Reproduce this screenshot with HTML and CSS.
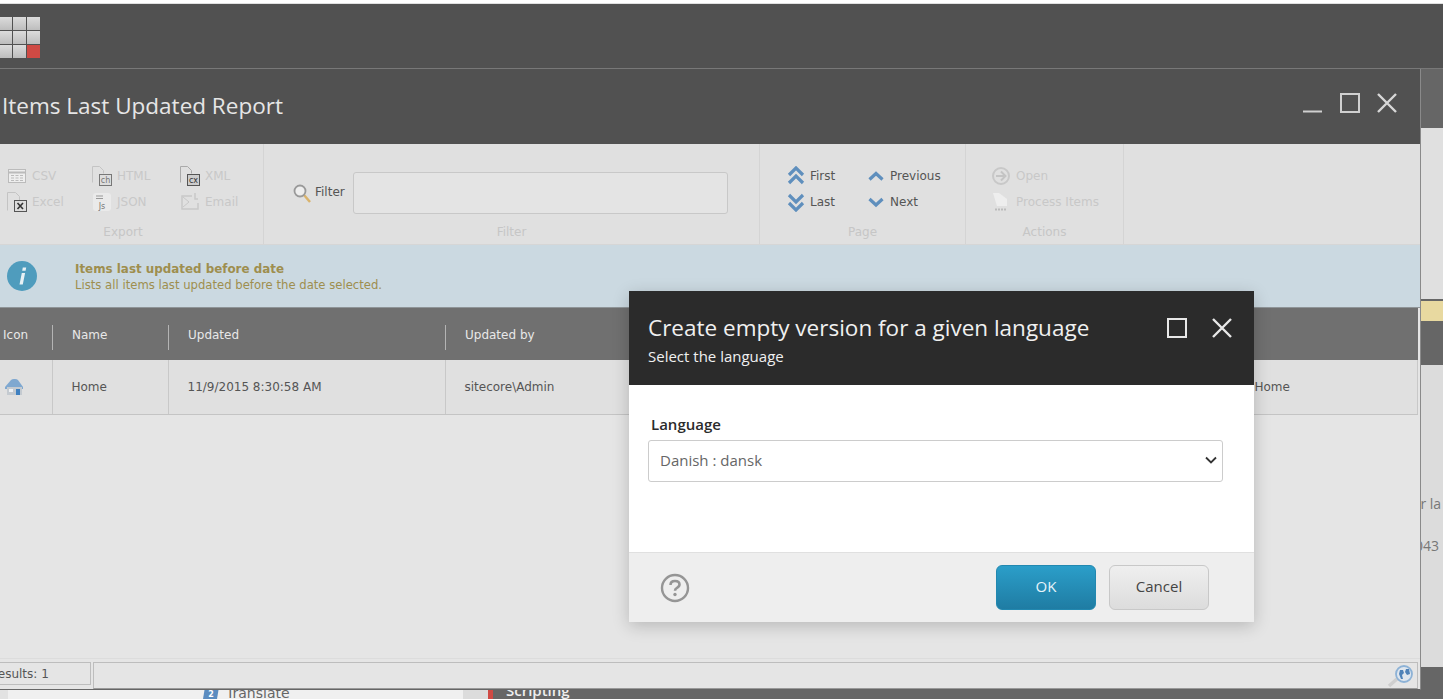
FILE: index.html
```html
<!DOCTYPE html>
<html lang="en">

<head>
    <meta charset="UTF-8">
    <title>Items Last Updated Report</title>
    <link rel="stylesheet" href="styles.css">
</head>

<body>
    <header class="top-bar">
        <div class="tiles">
            <i></i><i></i><i></i>
            <i></i><i></i><i></i>
            <i></i><i></i><i class="tile-red"></i>
        </div>
    </header>

    <div class="desk">
        <main class="window">
            <div class="title-bar">
                <h1>Items Last Updated Report</h1>
                <div class="window-controls">
                    <svg width="20" height="20" viewBox="0 0 20 20"><path d="M0 18.500h19" stroke="#d0d0d0" stroke-width="2"/></svg>
                    <svg width="20" height="20" viewBox="0 0 20 20"><rect x="1" y="1" width="18" height="18" fill="none" stroke="#d0d0d0" stroke-width="2"/></svg>
                    <svg width="20" height="20" viewBox="0 0 20 20"><path d="M1 1l18 18M19 1L1 19" stroke="#d8d8d8" stroke-width="2.400"/></svg>
                </div>
            </div>

            <div class="ribbon">
                <section class="group group-export">
                    <div class="group-body cols-export">
                        <a class="tool off"><svg width="20" height="20" viewBox="0 0 20 20"><rect x="1.500" y="3.500" width="17" height="13" fill="#eee" stroke="#bbb"/><path d="M1.500 6.500h17" stroke="#bbb" stroke-width="2"/><path d="M4 9.500h3M8.500 9.500h3M13 9.500h3M4 12h3M8.500 12h3M13 12h3M4 14.500h3M8.500 14.500h3M13 14.500h3" stroke="#bbb"/></svg>CSV</a>
                        <a class="tool off"><svg width="20" height="20" viewBox="0 0 20 20"><path d="M.500 16.500V.500h7l4 4v3" fill="none" stroke="#c4c4c4"/><rect x="7.500" y="8.500" width="12" height="11" fill="#ddd" stroke="#777"/><text x="13.500" y="17" class="icon-text">ch</text></svg>HTML</a>
                        <a class="tool off"><svg width="20" height="20" viewBox="0 0 20 20"><path d="M.500 16.500V.500h7l4 4v3" fill="none" stroke="#aaa"/><rect x="7.500" y="8.500" width="12" height="11" fill="#ccc" stroke="#555"/><text x="13.500" y="17" class="icon-text dark">cx</text></svg>XML</a>
                        <a class="tool off"><svg width="20" height="20" viewBox="0 0 20 20"><path d="M.500 18.500V.500h8l4 4v4" fill="none" stroke="#c4c4c4"/><rect x="7.500" y="8.500" width="12" height="11" fill="#ddd" stroke="#555"/><path d="M10.500 11l5.500 6M16 11l-5.500 6" stroke="#333" stroke-width="1.600"/></svg>Excel</a>
                        <a class="tool off"><svg width="20" height="20" viewBox="0 0 20 20"><rect x="1" y="1" width="18" height="18" rx="3" fill="#eaeaea"/><path d="M4 4h7M4 6.500h7" stroke="#999"/><text x="10" y="16.500" class="icon-text">Js</text></svg>JSON</a>
                        <a class="tool off"><svg width="20" height="20" viewBox="0 0 20 20"><path d="M12 4H2v13h16v-6" fill="none" stroke="#c8c8c8" stroke-width="1.500"/><path d="M3 5l6 5-6 5" fill="none" stroke="#c8c8c8"/><path d="M15 1v6h3" fill="none" stroke="#c8c8c8" stroke-width="1.500"/></svg>Email</a>
                    </div>
                    <footer>Export</footer>
                </section>

                <section class="group group-filter">
                    <div class="group-body filter-row">
                        <svg width="20" height="20" viewBox="0 0 20 20"><path d="M12 12l6 7" stroke="#d9b36c" stroke-width="2.500"/><circle cx="8" cy="8" r="5.500" fill="#eee" stroke="#999" stroke-width="1.800"/></svg>
                        <label for="filterBox">Filter</label>
                        <input type="text" id="filterBox">
                    </div>
                    <footer>Filter</footer>
                </section>

                <section class="group group-page">
                    <div class="group-body cols-page">
                        <a class="tool"><svg width="18" height="20" viewBox="0 0 18 20"><path d="M2 9l7-7 7 7M2 17l7-7 7 7" fill="none" stroke="#5f8fbd" stroke-width="3.200"/></svg>First</a>
                        <a class="tool"><svg width="18" height="20" viewBox="0 0 18 20"><path d="M2.500 13.500L9 7.500l6.500 6" fill="none" stroke="#5f8fbd" stroke-width="3.200"/></svg>Previous</a>
                        <a class="tool"><svg width="18" height="20" viewBox="0 0 18 20"><path d="M2 3l7 7 7-7M2 11l7 7 7-7" fill="none" stroke="#5f8fbd" stroke-width="3.200"/></svg>Last</a>
                        <a class="tool"><svg width="18" height="20" viewBox="0 0 18 20"><path d="M2.500 7l6.500 6 6.500-6" fill="none" stroke="#5f8fbd" stroke-width="3.200"/></svg>Next</a>
                    </div>
                    <footer>Page</footer>
                </section>

                <section class="group group-actions">
                    <div class="group-body cols-actions">
                        <a class="tool off"><svg width="20" height="20" viewBox="0 0 20 20"><circle cx="10" cy="10" r="8" fill="none" stroke="#c8c8c8" stroke-width="2"/><path d="M5 10h8M10 5.500l4.500 4.500-4.500 4.500" fill="none" stroke="#c4c4c4" stroke-width="2"/></svg>Open</a>
                        <a class="tool off"><svg width="20" height="20" viewBox="0 0 20 20"><path d="M2 1h6l8 6v7H6z" fill="#eeeeee"/><path d="M4 17.500h2M7 17.500h2M10 17.500h2M13 17.500h2" stroke="#bbb" stroke-width="2"/></svg>Process Items</a>
                    </div>
                    <footer>Actions</footer>
                </section>
            </div>

            <div class="info-bar">
                <svg width="30" height="30" viewBox="0 0 30 30"><circle cx="15" cy="15" r="15" fill="#4f9cbd"/><path d="M15.800 6.500h3.400l-.6 3.200h-3.400zM14.800 12h3.300l-2.300 11.500h-3.300z" fill="#e8f1f5"/></svg>
                <div>
                    <strong>Items last updated before date</strong>
                    <p>Lists all items last updated before the date selected.</p>
                </div>
            </div>

            <div class="results">
                <table>
                    <colgroup>
                        <col class="c-icon">
                        <col class="c-name">
                        <col class="c-updated">
                        <col class="c-by">
                        <col class="c-path">
                        <col>
                    </colgroup>
                    <tr>
                        <th><span>Icon</span></th>
                        <th><span>Name</span></th>
                        <th><span>Updated</span></th>
                        <th><span>Updated by</span></th>
                        <th></th>
                        <th></th>
                    </tr>
                    <tr>
                        <td><svg width="20" height="18" viewBox="0 0 20 18"><path d="M1 9l6-7q1-1 3-1h1q2 0 3 1l5 7v2H1z" fill="#7fa8d0"/><path d="M3 9h15v8H3z" fill="#c4cad0"/><path d="M12 11h4v6h-4z" fill="#3f80c0"/><path d="M5 11h4v3H5z" fill="#eef1f4"/></svg></td>
                        <td>Home</td>
                        <td>11/9/2015 8:30:58 AM</td>
                        <td>sitecore\Admin</td>
                        <td></td>
                        <td>Home</td>
                    </tr>
                </table>
            </div>

            <div class="status-bar">
                <div class="count"><span>Results: 1</span></div>
                <div class="status-fill">
                    <svg width="30" height="24" viewBox="0 0 30 24"><path d="M2 22l9-8" stroke="#cfcfcf" stroke-width="3.500"/><circle cx="17" cy="10" r="8" fill="#dfe6ee" stroke="#8db2d6" stroke-width="1.800"/><path d="M13 6h3l1 3-2 2 1 4h-2l-2-5zM19 5h3l1 5-3 1-2-3z" fill="#4f82b8"/></svg>
                </div>
            </div>
        </main>

        <aside class="side">
            <div class="side-dark"></div>
            <div class="side-light"></div>
            <div class="side-yellow"></div>
            <div class="side-gray"></div>
            <div class="side-text">
                <p>or la</p>
                <p class="side-num">043</p>
            </div>
            <div class="side-foot"></div>
        </aside>
    </div>

    <div class="under">
        <div class="under-edge"></div>
        <div class="under-list">
            <svg width="16" height="12" viewBox="0 0 16 12"><path d="M2 0h14l-2 12H0z" fill="#5b8cc0"/><text x="8" y="10" class="icon-text light">2</text></svg>
            <span>Translate</span>
        </div>
        <div class="under-gap"></div>
        <div class="under-dark"><span>Scripting</span></div>
    </div>

    <div class="dialog">
        <div class="dialog-head">
            <div>
                <h2>Create empty version for a given language</h2>
                <p>Select the language</p>
            </div>
            <div class="dialog-controls">
                <svg width="20" height="20" viewBox="0 0 20 20"><rect x="1" y="1" width="18" height="18" fill="none" stroke="#e8e8e8" stroke-width="2"/></svg>
                <svg width="20" height="20" viewBox="0 0 20 20"><path d="M1 1l18 18M19 1L1 19" stroke="#e8e8e8" stroke-width="2.400"/></svg>
            </div>
        </div>
        <div class="dialog-body">
            <label for="langSelect">Language</label>
            <div class="select-box" id="langSelect">
                <span>Danish : dansk</span>
                <svg width="12" height="8" viewBox="0 0 12 8"><path d="M1 1.500l5 5 5-5" fill="none" stroke="#333" stroke-width="1.800"/></svg>
            </div>
        </div>
        <div class="dialog-foot">
            <svg class="help" width="30" height="30" viewBox="0 0 30 30"><circle cx="15" cy="15" r="13" fill="none" stroke="#959595" stroke-width="2.400"/><path d="M10.500 12q0-4 4.500-4t4.500 3.600q0 2-2.500 3.200-2 1-2 3" fill="none" stroke="#959595" stroke-width="2.600"/><circle cx="15" cy="21.500" r="1.700" fill="#959595"/></svg>
            <button class="btn btn-ok">OK</button>
            <button class="btn btn-cancel">Cancel</button>
        </div>
    </div>
</body>

</html>
```

FILE: styles.css
```css
* {
    box-sizing: border-box;
}

html,
body {
    margin: 0;
    height: 699px;
    overflow: hidden;
}

body {
    position: relative;
    display: flex;
    flex-direction: column;
    padding-top: 3px;
    background-color: #fff;
    font-family: 'DejaVu Sans', sans-serif;
    font-size: 12px;
    color: #555;
}

h1,
h2,
p {
    margin: 0;
    font-weight: normal;
}

.icon-text {
    font-size: 8px;
    text-anchor: middle;
    fill: #777;
}

.icon-text.dark {
    fill: #333;
}

.icon-text.light {
    font-weight: bold;
    fill: #fff;
}

/* top bar */
.top-bar {
    height: 66px;
    flex: none;
    padding-top: 13px;
    background-color: #515151;
    border-top: 1px solid #e0e0e0;
    border-bottom: 1px solid #787878;
}

.tiles {
    display: grid;
    grid-template-columns: repeat(3, 13px);
    grid-auto-rows: 13px;
    gap: 1px;
    width: 41px;
    margin-left: -1px;
}

.tiles i {
    background: linear-gradient(#dcdcdc, #bdbdbd);
}

.tiles .tile-red {
    background: #cf4a44;
}

/* window */
.desk {
    display: flex;
    height: 621px;
    flex: none;
}

.window {
    width: 1421px;
    flex: none;
    display: flex;
    flex-direction: column;
    background-color: #e5e5e5;
    border-right: 1px solid #8a8a8a;
    border-bottom: 1px solid #666;
}

.title-bar {
    height: 75px;
    flex: none;
    display: flex;
    align-items: center;
    justify-content: space-between;
    padding: 0 23px 3px 2px;
    background-color: #515151;
}

.title-bar h1 {
    font-family: 'Open Sans', sans-serif;
    font-size: 22.5px;
    color: #e6e6e6;
}

.window-controls {
    display: flex;
    gap: 17px;
    margin-bottom: 4px;
}

/* ribbon */
.ribbon {
    height: 101px;
    flex: none;
    display: flex;
    background-color: #e0e0e0;
    border-bottom: 1px solid #d6d6d6;
}

.group {
    display: flex;
    flex-direction: column;
    border-right: 1px solid #d4d4d4;
}

.group footer {
    height: 27px;
    text-align: center;
    color: #c6c6c6;
    line-height: 31px;
}

.group-body {
    flex: 1;
    padding-top: 19px;
}

.group-export {
    width: 264px;
}

.group-export footer {
    padding-right: 17px;
}

.group-filter {
    width: 496px;
}

.group-page {
    width: 206px;
}

.group-actions {
    width: 158px;
}

.cols-export,
.cols-page,
.cols-actions {
    display: grid;
    grid-auto-rows: 26px;
}

.cols-export {
    grid-template-columns: 85px 88px 1fr;
    padding-left: 7px;
}

.cols-page {
    grid-template-columns: 80px 1fr;
    padding-left: 27px;
}

.cols-actions {
    grid-template-columns: 1fr;
    padding-left: 25px;
}

.tool {
    display: flex;
    align-items: center;
    gap: 5px;
    height: 26px;
    color: #555;
    white-space: nowrap;
}

.tool.off {
    color: #c8c8c8;
}

.filter-row {
    display: flex;
    align-items: center;
    padding: 28px 31px 3px 28px;
}

.filter-row label {
    margin-left: 3px;
    width: 38px;
    padding-bottom: 2px;
}

.filter-row input {
    width: 375px;
    height: 42px;
    background-color: #e4e4e4;
    border: 1px solid #c8c8c8;
    border-radius: 3px;
}

/* info */
.info-bar {
    height: 63px;
    flex: none;
    display: flex;
    align-items: center;
    gap: 38px;
    padding: 0 0 0 7px;
    background-color: #cbd9e1;
    border-bottom: 1px solid #8f9598;
    color: #9e8e4e;
}

.info-bar strong {
    display: block;
    font-size: 11.9px;
    line-height: 16px;
    margin-top: 2px;
}

.info-bar p {
    font-size: 11.65px;
    line-height: 16px;
}

/* results */
.results {
    flex: 1;
    padding-right: 2px;
}

.results table {
    width: 100%;
    table-layout: fixed;
    border-collapse: collapse;
}

.c-icon {
    width: 52px;
}

.c-name {
    width: 116px;
}

.c-updated {
    width: 277px;
}

.c-by {
    width: 400px;
}

.c-path {
    width: 390px;
}

.results th {
    height: 52px;
    padding: 6px 0 0;
    text-align: left;
    font-weight: normal;
    color: #e8e8e8;
    background-color: #707070;
}

.results th span {
    display: flex;
    align-items: center;
    height: 25px;
    padding: 0 0 5px 19px;
    border-left: 1px solid #b4b4b4;
}

.results th:first-child span {
    padding-left: 3px;
    border-left: 0;
}

.results td {
    height: 54px;
    padding: 0 0 0 19px;
    background-color: #e0e0e0;
    border-left: 1px solid #cecece;
    border-right: 1px solid #c8c8c8;
    border-bottom: 1px solid #c4c4c4;
    color: #555;
}

.results td:first-child {
    padding-left: 4px;
    border-left: 0;
}

.results td svg {
    display: block;
}

/* status bar */
.status-bar {
    height: 31px;
    flex: none;
    display: flex;
    gap: 2px;
    padding: 3px 2px 0 0;
    border-top: 1px solid #dcdcdc;
    background-color: #e5e5e5;
}

.count {
    width: 91px;
    height: 23px;
    overflow: hidden;
    display: flex;
    align-items: center;
    border: 1px solid #bdbdbd;
    border-left: 0;
    white-space: nowrap;
}

.count span {
    margin-left: -10px;
}

.status-fill {
    flex: 1;
    height: 27px;
    display: flex;
    justify-content: flex-end;
    align-items: center;
    border: 1px solid #bdbdbd;
    border-bottom-color: #999;
}

/* right edge */
.side {
    flex: 1;
    display: flex;
    flex-direction: column;
    overflow: hidden;
    background-color: #dcdcdc;
}

.side-dark {
    height: 59px;
    background-color: #666;
}

.side-light {
    height: 173px;
    background-color: #e0e0e0;
    border-bottom: 2px solid #666;
}

.side-yellow {
    height: 20px;
    background-color: #e8d9a0;
}

.side-gray {
    height: 44px;
    background-color: #666;
}

.side-text {
    flex: 1;
    margin-left: -9px;
    padding-top: 129px;
    font-family: 'Open Sans', sans-serif;
    font-size: 14px;
    white-space: nowrap;
    color: #777;
}

.side-text p {
    height: 42px;
    line-height: 20px;
}

.side-text .side-num {
    margin-left: 3px;
}

.side-foot {
    height: 23px;
    flex: none;
    background-color: #666;
}

/* what shows under the window */
.under {
    flex: 1;
    display: flex;
    overflow: hidden;
    background-color: #f0f0f0;
}

.under-edge {
    width: 8px;
    background-color: #e2e2e2;
}

.under-list {
    width: 455px;
    display: flex;
    gap: 7px;
    padding-left: 195px;
    margin-top: -4px;
    height: 14px;
    font-size: 14px;
    color: #666;
    align-items: center;
}

.under-gap {
    width: 25px;
    background-color: #dcdcdc;
}

.under-dark {
    flex: 1;
    background-color: #666;
    border-left: 5px solid #cf4a44;
    padding-left: 13px;
    font-family: 'Open Sans', sans-serif;
    font-size: 15px;
    font-weight: 600;
    line-height: 14px;
    color: #eee;
}

.under-dark span {
    display: block;
    margin-top: -7px;
}

/* dialog */
.dialog {
    position: absolute;
    left: 629px;
    top: 291px;
    width: 625px;
    height: 331px;
    display: flex;
    flex-direction: column;
    font-family: 'Open Sans', sans-serif;
    box-shadow: 0 4px 16px rgba(0, 0, 0, 0.2);
}

.dialog-head {
    height: 94px;
    flex: none;
    display: flex;
    justify-content: space-between;
    padding: 19px 22px 0 19px;
    background-color: #2b2b2b;
    color: #f0f0f0;
}

.dialog-head h2 {
    font-size: 22.5px;
    line-height: 35px;
}

.dialog-head p {
    font-size: 15px;
    line-height: 22px;
}

.dialog-controls {
    display: flex;
    gap: 25px;
    padding-top: 8px;
}

.dialog-body {
    flex: 1;
    display: flex;
    flex-direction: column;
    padding: 29px 31px 0 19px;
    background-color: #fff;
}

.dialog-body label {
    padding-left: 3px;
    margin-bottom: 5px;
    font-size: 15px;
    line-height: 21px;
    font-weight: 600;
    color: #2b2b2b;
}

.select-box {
    height: 42px;
    display: flex;
    align-items: center;
    justify-content: space-between;
    padding: 0 5px 2px 11px;
    font-size: 15px;
    color: #666;
    border: 1px solid #ccc;
    border-radius: 3px;
}

.dialog-foot {
    height: 70px;
    flex: none;
    display: flex;
    align-items: flex-start;
    padding: 12px 45px 0 31px;
    background-color: #eee;
    border-top: 1px solid #e0e0e0;
}

.help {
    margin: 8px auto 0 0;
}

.btn {
    width: 100px;
    height: 45px;
    padding: 0 0 4px;
    font-family: 'Open Sans', sans-serif;
    font-size: 15px;
    border-radius: 6px;
    cursor: pointer;
}

.btn-ok {
    margin-right: 13px;
    color: #e8f4fa;
    background: linear-gradient(#2b9ec9, #1f7ca3);
    border: 1px solid #2288b0;
}

.btn-cancel {
    color: #444;
    background: linear-gradient(#efefef, #dcdcdc);
    border: 1px solid #c8c8c8;
}
```
